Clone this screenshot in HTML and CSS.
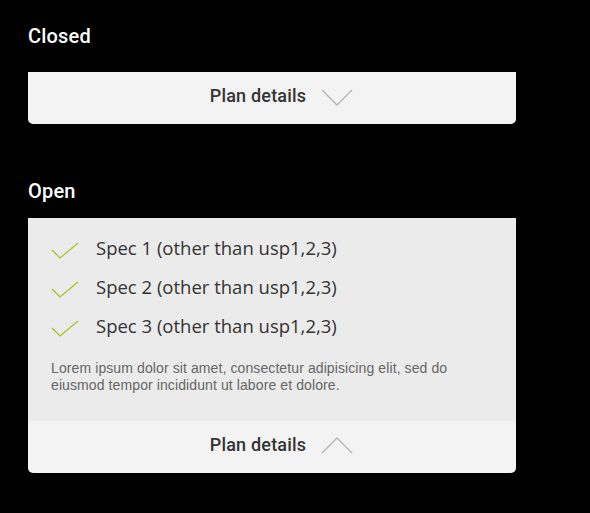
FILE: index.html
```html
<!DOCTYPE html>
<html>
<head>
<meta charset="utf-8">
<link rel="stylesheet" href="styles.css">
</head>
<body>
<div class="page">
  <h2 class="label label-closed">Closed</h2>
  <div class="card">
    <div class="toggle">
      <span class="toggle-text">Plan details</span>
      <svg class="chev" width="32" height="17" viewBox="0 0 32 17"><polyline points="1,1 16,16 31,1" fill="none" stroke="#b3b3b3" stroke-width="1.3"/></svg>
    </div>
  </div>

  <h2 class="label label-open">Open</h2>
  <div class="card">
    <div class="details">
      <ul class="specs">
        <li class="spec"><svg class="check" width="28" height="20" viewBox="0 0 28 20"><polyline points="1,8 9,16 27,1" fill="none" stroke="#a6c21a" stroke-width="1.2"/></svg><span>Spec 1 (other than usp1,2,3)</span></li>
        <li class="spec"><svg class="check" width="28" height="20" viewBox="0 0 28 20"><polyline points="1,8 9,16 27,1" fill="none" stroke="#a6c21a" stroke-width="1.2"/></svg><span>Spec 2 (other than usp1,2,3)</span></li>
        <li class="spec"><svg class="check" width="28" height="20" viewBox="0 0 28 20"><polyline points="1,8 9,16 27,1" fill="none" stroke="#a6c21a" stroke-width="1.2"/></svg><span>Spec 3 (other than usp1,2,3)</span></li>
      </ul>
      <p class="lorem">Lorem ipsum dolor sit amet, consectetur adipisicing elit, sed do eiusmod tempor incididunt ut labore et dolore.</p>
    </div>
    <div class="toggle">
      <span class="toggle-text">Plan details</span>
      <svg class="chev chev-up" width="32" height="17" viewBox="0 0 32 17"><polyline points="1,16 16,1 31,16" fill="none" stroke="#b3b3b3" stroke-width="1.3"/></svg>
    </div>
  </div>
</div>
</body>
</html>
```
FILE: styles.css
```css
html, body {
  margin: 0;
  padding: 0;
  background: #000;
}
.page {
  width: 488px;
  padding: 0 0 0 28px;
  font-family: "Open Sans", "Liberation Sans", sans-serif;
}
.label {
  margin: 0;
  color: #fff;
  font-family: Roboto, "Open Sans", sans-serif;
  font-size: 20px;
  font-weight: 500;
  letter-spacing: 0.2px;
  line-height: 24px;
}
.label-closed {
  padding-top: 24px;
  margin-bottom: 24px;
}
.label-open {
  margin-top: 55px;
  margin-bottom: 15px;
}
.card {
  background: #f3f3f3;
  border-radius: 0 0 5px 5px;
  overflow: hidden;
}
.toggle {
  height: 52px;
  display: flex;
  align-items: center;
  justify-content: center;
  gap: 15px;
  padding-left: 19px;
}
.toggle-text {
  font-family: Roboto, "Open Sans", sans-serif;
  font-size: 18px;
  color: #333;
  font-weight: 500;
  letter-spacing: 0.2px;
  line-height: 22px;
  margin-top: -4px;
}
.chev {
  display: block;
  margin-top: -2px;
}
.chev-up {
  margin-top: -4px;
}
.details {
  background: #ebebeb;
  height: 203px;
  box-sizing: border-box;
  padding: 16px 0 0 23px;
}
.specs {
  list-style: none;
  margin: 0;
  padding: 0;
  display: flex;
  flex-direction: column;
  gap: 13px;
}
.spec {
  display: flex;
  align-items: center;
  height: 26px;
  font-size: 18.5px;
  color: #333;
}
.check {
  display: block;
  margin-right: 17px;
  margin-top: 9px;
}
.lorem {
  margin: 22px 0 0 0;
  font-family: "Liberation Sans", Arial, sans-serif;
  font-size: 14px;
  letter-spacing: 0.1px;
  line-height: 17px;
  color: #666;
  width: 420px;
}
```
